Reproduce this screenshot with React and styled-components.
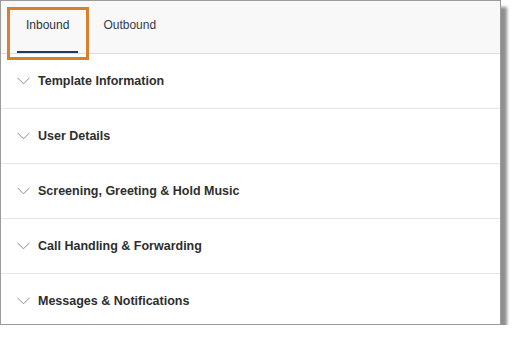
import styled, { createGlobalStyle } from "styled-components";

const GlobalStyle = createGlobalStyle`
  html, body {
    margin: 0;
    padding: 0;
    background: #ffffff;
  }
  body {
    font-family: "Liberation Sans", Arial, sans-serif;
  }
`;

const Frame = styled.div`
  position: relative;
  box-sizing: border-box;
  width: 501px;
  height: 325px;
  border: 1px solid #9b9b9b;
  background: #ffffff;
  box-shadow: 6px 7px 3px #8f8f8f;
`;

const TabBar = styled.div`
  display: flex;
  align-items: stretch;
  gap: 16px;
  height: 52px;
  padding-left: 16px;
  background: #f8f8f8;
  border-bottom: 1px solid #dedede;
`;

const Tab = styled.div`
  display: flex;
  align-items: center;
  padding: 0 9px 2px;
  font-size: 12px;
  color: ${(p) => (p.$active ? "#2b3440" : "#34404c")};
  border-bottom: 2px solid ${(p) => (p.$active ? "#1c3d5a" : "transparent")};
  box-sizing: border-box;
`;

const Highlight = styled.div`
  position: absolute;
  left: 6px;
  top: 6px;
  width: 82px;
  height: 53px;
  box-sizing: border-box;
  border: 3px solid #d4802c;
  pointer-events: none;
`;

const Section = styled.div`
  display: flex;
  align-items: center;
  gap: 8px;
  height: 54px;
  padding-left: 16px;
  border-bottom: ${(p) => (p.$last ? "none" : "1px solid #e6e6e6")};
`;

const Title = styled.span`
  font-size: 12.5px;
  font-weight: bold;
  color: #2e2e2e;
`;

const Chevron = () => (
  <svg width="13" height="8" viewBox="0 0 13 8">
    <path d="M0.5 0.8 L6.5 6.8 L12.5 0.8" fill="none" stroke="#8c8c8c" strokeWidth="1" />
  </svg>
);

const sections = [
  "Template Information",
  "User Details",
  "Screening, Greeting & Hold Music",
  "Call Handling & Forwarding",
  "Messages & Notifications",
];

export default function App() {
  return (
    <>
      <GlobalStyle />
      <Frame>
        <TabBar>
          <Tab $active>Inbound</Tab>
          <Tab>Outbound</Tab>
        </TabBar>
        {sections.map((s, i) => (
          <Section key={s} $last={i === sections.length - 1}>
            <Chevron />
            <Title>{s}</Title>
          </Section>
        ))}
        <Highlight />
      </Frame>
    </>
  );
}
